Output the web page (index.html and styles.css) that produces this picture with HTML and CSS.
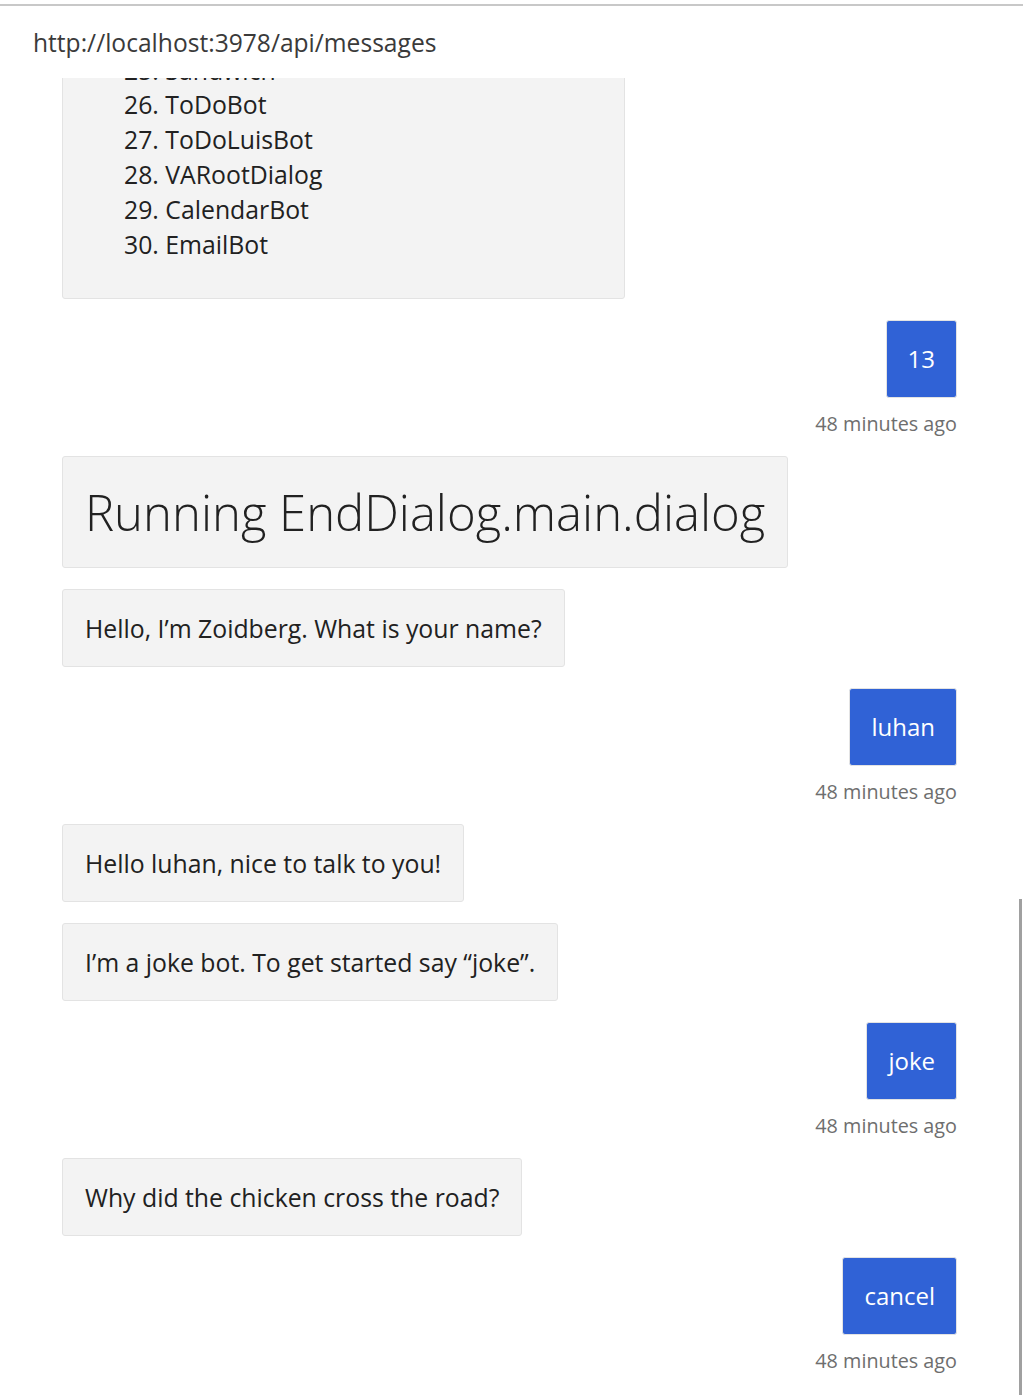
FILE: index.html
```html
<!DOCTYPE html>
<html lang="en">
<head>
  <meta charset="UTF-8" />
  <title>Bot Emulator - Conversation</title>
  <link rel="stylesheet" href="styles.css">
</head>
<body>
  <div class="top-line"></div>

  <!-- Endpoint header -->
  <div class="endpoint">http://localhost:3978/api/messages</div>

  <!-- Transcript -->
  <div class="transcript">
    <div class="messages">
      <div class="bubble bot list-card">
        <ol start="25">
          <li>Sandwich</li>
          <li>ToDoBot</li>
          <li>ToDoLuisBot</li>
          <li>VARootDialog</li>
          <li>CalendarBot</li>
          <li>EmailBot</li>
        </ol>
      </div>

      <div class="user-group">
        <div class="bubble user">13</div>
        <div class="timestamp">48 minutes ago</div>
      </div>

      <div class="bubble bot heading">Running EndDialog.main.dialog</div>
      <div class="bubble bot">Hello, I’m Zoidberg. What is your name?</div>

      <div class="user-group">
        <div class="bubble user">luhan</div>
        <div class="timestamp">48 minutes ago</div>
      </div>

      <div class="bubble bot">Hello luhan, nice to talk to you!</div>
      <div class="bubble bot">I’m a joke bot. To get started say “joke”.</div>

      <div class="user-group">
        <div class="bubble user">joke</div>
        <div class="timestamp">48 minutes ago</div>
      </div>

      <div class="bubble bot">Why did the chicken cross the road?</div>

      <div class="user-group">
        <div class="bubble user">cancel</div>
        <div class="timestamp">48 minutes ago</div>
      </div>
    </div>

    <div class="scrollbar">
      <div class="thumb"></div>
    </div>
  </div>
</body>
</html>
```

FILE: styles.css
```css
* { margin: 0; padding: 0; box-sizing: border-box; }

html, body {
  height: 100%;
  background: #ffffff;
  font-family: 'Open Sans', 'Noto Sans', sans-serif;
  color: #212121;
  overflow: hidden;
}

.top-line {
  margin-top: 4px;
  height: 2px;
  background: #c8c8c8;
}

.endpoint {
  height: 72px;
  display: flex;
  align-items: center;
  padding-left: 33px;
  font-size: 24.6px;
  color: #3a3a3a;
}

.transcript {
  display: flex;
  height: calc(100% - 78px);
  overflow: hidden;
}

.messages {
  flex: 1;
  display: flex;
  flex-direction: column;
  align-items: flex-start;
  padding: 0 62px 0 62px;
}

.bubble {
  font-size: 24.8px;
  line-height: 34px;
  padding: 21px 22px;
  border: 1px solid #e3e3e3;
  border-radius: 3px;
  margin-bottom: 21px;
}

.bot {
  background: #f3f3f3;
  color: #212121;
}

.list-card {
  width: 563px;
  margin-top: -47px;
  padding-bottom: 36px;
  line-height: 35px;
}

.list-card ol {
  list-style-position: inside;
  padding-left: 39px;
}

/* partly hidden under the header */
.list-card li:first-child {
  margin-bottom: -1px;
}

.heading {
  font-size: 49px;
  font-weight: 300;
  line-height: 68px;
}

.user-group {
  align-self: flex-end;
  display: flex;
  flex-direction: column;
  align-items: flex-end;
  margin-bottom: 19px;
}

.user {
  background: #3062d6;
  color: #ffffff;
  font-size: 24px;
  padding: 21px 21px;
  margin-bottom: 0;
}

.timestamp {
  margin-top: 12px;
  font-size: 19.8px;
  line-height: 27px;
  color: #6e6e6e;
}

.scrollbar {
  width: 3px;
  margin-right: 1px;
  display: flex;
  flex-direction: column;
}

.thumb {
  margin-top: 821px;
  flex: 1;
  background: #a0a0a0;
}
```
